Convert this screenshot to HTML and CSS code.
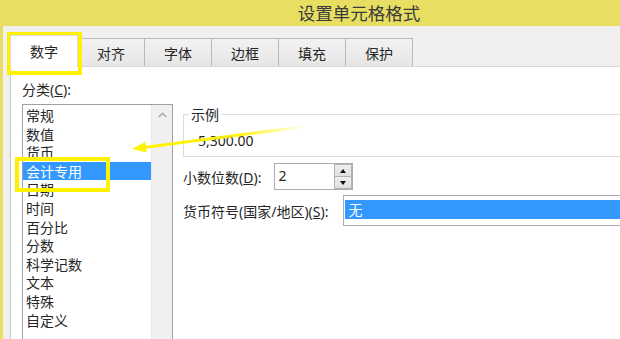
FILE: index.html
```html
<!DOCTYPE html>
<html lang="zh-CN">
<head>
    <meta charset="UTF-8">
    <title>设置单元格格式</title>
    <link rel="stylesheet" href="styles.css">
</head>

<body>

<div class="dialog">
    <!-- Title bar -->
    <div class="titlebar">设置单元格格式</div>

    <div class="frame">
        <!-- Tab strip -->
        <div class="tabs">
            <div class="tab active">数字</div>
            <div class="tab">对齐</div>
            <div class="tab">字体</div>
            <div class="tab">边框</div>
            <div class="tab">填充</div>
            <div class="tab">保护</div>
        </div>

        <!-- Tab page -->
        <div class="panel">
            <div class="left-col">
                <div class="caption">分类(<u>C</u>):</div>
                <div class="listbox">
                    <ul class="items">
                        <li>常规</li>
                        <li>数值</li>
                        <li>货币</li>
                        <li class="selected">会计专用</li>
                        <li>日期</li>
                        <li>时间</li>
                        <li>百分比</li>
                        <li>分数</li>
                        <li>科学记数</li>
                        <li>文本</li>
                        <li>特殊</li>
                        <li>自定义</li>
                    </ul>
                    <div class="scrollbar">
                        <div class="scroll-up">
                            <svg width="9" height="6" viewBox="0 0 9 6">
                                <polyline points="0.8,5 4.5,1.2 8.2,5" fill="none" stroke="#a6a6a6" stroke-width="1.3"/>
                            </svg>
                        </div>
                    </div>
                </div>
            </div>

            <div class="right-col">
                <fieldset class="sample">
                    <legend>示例</legend>
                    <div class="sample-value">5,300.00</div>
                </fieldset>

                <div class="field-row row-decimals">
                    <span class="field-label">小数位数(<u>D</u>):</span>
                    <div class="spin">
                        <div class="spin-value">2</div>
                        <div class="spin-btns">
                            <div class="spin-btn"><span class="tri-up"></span></div>
                            <div class="spin-btn"><span class="tri-down"></span></div>
                        </div>
                    </div>
                </div>

                <div class="field-row row-symbol">
                    <span class="field-label">货币符号(国家/地区)(<u>S</u>):</span>
                    <div class="combo">
                        <div class="combo-sel">无</div>
                    </div>
                </div>
            </div>
        </div>
    </div>

    <!-- Yellow annotation marks -->
    <div class="mark mark-tab"></div>
    <div class="mark mark-item"></div>
    <svg class="arrow" width="620" height="339" viewBox="0 0 620 339">
        <defs>
            <linearGradient id="fade" x1="145" y1="0" x2="305" y2="0" gradientUnits="userSpaceOnUse">
                <stop offset="0" stop-color="#fff200" stop-opacity="1"/>
                <stop offset="0.6" stop-color="#fff200" stop-opacity="0.9"/>
                <stop offset="1" stop-color="#fff200" stop-opacity="0"/>
            </linearGradient>
        </defs>
        <line x1="144" y1="147.4" x2="305" y2="126.5" stroke="url(#fade)" stroke-width="3"/>
        <polygon points="132,149 145.3,141.8 146.7,152.6" fill="#fff200"/>
    </svg>
</div>

</body>
</html>
```

FILE: styles.css
```css
/* Page */
body {
    margin: 0;
    width: 620px;
    height: 339px;
    overflow: hidden;
    background-color: #f0f0f0;
    font-family: "Noto Sans", "Noto Sans CJK SC", sans-serif;
    font-size: 14px;
    color: #262626;
}

/* Dialog window (cut off at the right edge of the screenshot) */
.dialog {
    position: relative;
    width: 620px;
    height: 339px;
    display: flex;
    flex-direction: column;
}

/* Title bar */
.titlebar {
    height: 28px;
    line-height: 26px;
    text-align: center;
    padding-left: 98px; /* title is centred on the full dialog width */
    background-color: #e8df62; /* yellow window frame */
    color: #3a3a3a;
    font-size: 17.5px;
    font-family: "Noto Sans CJK SC", sans-serif;
}

.frame {
    flex: 1;
    display: flex;
    flex-direction: column;
    border-left: 3px solid #e8df62;
    background-color: #f0f0f0;
}

/* Tabs */
.tabs {
    height: 40px;
    box-sizing: border-box;
    display: flex;
    align-items: flex-end;
    padding-left: 7px;
}

.tab {
    width: 67px;
    height: 28px;
    box-sizing: border-box;
    border: 1px solid #b9b9b9;
    border-bottom: none;
    border-left: none;
    background: linear-gradient(#f2f2f2, #e6e6e6);
    text-align: center;
    line-height: 28px;
    font-family: "Noto Sans CJK SC", sans-serif;
}

.tab.active {
    width: 68px;
    height: 32px;
    margin-bottom: -1px;
    line-height: 31px;
    border-left: 1px solid #d9d9d9;
    border-color: #d9d9d9;
    background: #ffffff;
    position: relative;
    z-index: 1;
}

/* Tab page */
.panel {
    flex: 1;
    display: flex;
    gap: 10px;
    margin-left: 7px;
    padding-left: 11px;
    background-color: #ffffff;
    border-left: 1px solid #c9c9c9;
    border-top: 1px solid #d9d9d9;
}

.left-col {
    width: 151px;
    flex-shrink: 0;
}

.caption {
    margin-top: 14px;
    margin-bottom: 5px;
    line-height: 18px;
}

/* Category list */
.listbox {
    display: flex;
    height: 240px;
    border: 1px solid #9da1a8;
    background-color: #ffffff;
}

.items {
    flex: 1;
    list-style: none;
    margin: 0;
    padding: 1px 0 0 0;
    font-family: "Noto Sans CJK SC", sans-serif;
}

.items li {
    height: 18.6px;
    line-height: 18.6px;
    padding-left: 3px;
}

.items li.selected {
    background-color: #3399ff;
    color: #ffffff;
}

.scrollbar {
    width: 20px;
    background-color: #f0f0f0;
    border-left: 1px solid #e8e8e8;
}

.scroll-up {
    height: 19px;
    display: flex;
    align-items: center;
    justify-content: center;
}

/* Right column */
.right-col {
    flex: 1;
    min-width: 0;
}

.sample {
    margin: 38px 0 0 0;
    padding: 0 0 6px 5px;
    border: 1px solid #dcdcdc;
    border-right: none;
}

.sample legend {
    padding: 0 2px;
    line-height: 18px;
    font-family: "Noto Sans CJK SC", sans-serif;
}

.sample-value {
    margin-top: 9px;
    padding-left: 9px;
    line-height: 18px;
}

.field-row {
    display: flex;
    align-items: center;
}

.row-decimals {
    margin-top: 6px;
    gap: 13px;
}

.row-symbol {
    margin-top: 5px;
    gap: 15px;
}

.field-label {
    white-space: nowrap;
}

/* Spin box */
.spin {
    display: flex;
    width: 79px;
    height: 27px;
    box-sizing: border-box;
    border: 1px solid #abadb3;
}

.spin-value {
    flex: 1;
    padding-left: 3px;
    line-height: 24px;
}

.spin-btns {
    width: 18px;
    display: flex;
    flex-direction: column;
}

.spin-btn {
    flex: 1;
    display: flex;
    align-items: center;
    justify-content: center;
    border: 1px solid #b3b3b3;
    background: linear-gradient(#f0f0f0, #e0e0e0);
}

.spin-btn + .spin-btn {
    border-top: none;
}

.tri-up {
    border-left: 3.5px solid transparent;
    border-right: 3.5px solid transparent;
    border-bottom: 4px solid #111111;
}

.tri-down {
    border-left: 3.5px solid transparent;
    border-right: 3.5px solid transparent;
    border-top: 4px solid #111111;
}

/* Currency symbol box */
.combo {
    flex: 1;
    height: 31px;
    box-sizing: border-box;
    border: 1px solid #abadb3;
    border-right: none;
    padding: 4px 0 6px 1px;
}

.combo-sel {
    height: 19px;
    line-height: 19px;
    padding-left: 3px;
    background-color: #3399ff;
    color: #ffffff;
    font-family: "Noto Sans CJK SC", sans-serif;
}

/* Yellow annotation boxes */
.mark {
    position: absolute;
    box-sizing: border-box;
    border: 4px solid #fff200;
}

.mark-tab {
    left: 7px;
    top: 32px;
    width: 75px;
    height: 43px;
}

.mark-item {
    left: 15px;
    top: 157px;
    width: 95px;
    height: 35px;
}

.arrow {
    position: absolute;
    left: 0;
    top: 0;
    pointer-events: none;
}
```
